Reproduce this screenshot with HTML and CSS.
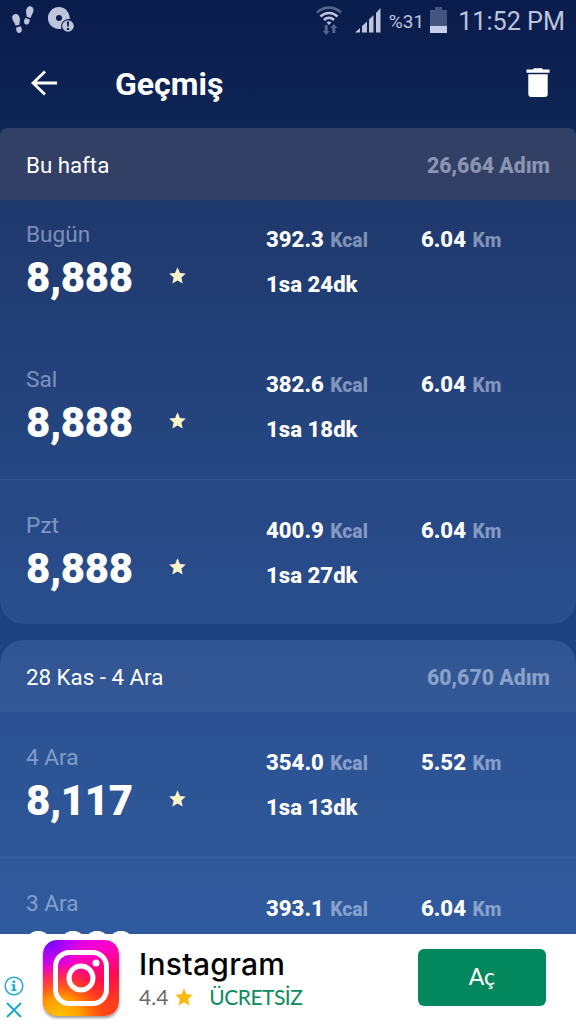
FILE: index.html
```html
<!DOCTYPE html>
<html lang="tr">
<head>
    <meta charset="UTF-8">
    <meta name="viewport" content="width=device-width, initial-scale=1.0">
    <title>Geçmiş</title>
    <link rel="stylesheet" href="styles.css">
</head>
<body>

    <!-- Shared icons -->
    <svg class="sprite" width="0" height="0">
        <symbol id="star" viewBox="0 0 24 24">
            <path d="M12 .5l3.400 7.800 8.400.8-6.300 5.700 1.800 8.400-7.300-4.300-7.300 4.300 1.800-8.400L.2 9.100l8.400-.8z"/>
        </symbol>
    </svg>

    <div class="screen">

        <!-- Status bar -->
        <div class="status-bar">
            <svg class="icon-steps" width="22" height="28" viewBox="0 0 22 28">
                <path d="M3.500 8c2.400-.3 4.400 2.200 4.400 5.500 0 2-.6 3.300-.5 5.300l-3.900 1C3 16.500.3 15 .2 11.800 0 9.700 1.300 8.200 3.500 8z"/>
                <path d="M4.200 21.400l4.500-1.100c1.700 2.400 1.700 5.900-.8 6.500-2.800.7-4-2.200-3.700-5.400z"/>
                <path d="M18.300.2c-2.500-.3-4.300 2.400-4.200 5.700 0 2 .7 2.900.6 4.900l4 1.300c.5-3.300 2.700-4.800 2.800-7.900.1-2.100-1-3.700-3.200-4z"/>
                <path d="M13.400 12l4.400 1.500c0 3.300-1.400 5.700-3.900 4.900-2.500-.8-2.200-4.100-.5-6.400z"/>
            </svg>
            <svg class="icon-disc" width="28" height="28" viewBox="0 0 28 28">
                <path fill-rule="evenodd" d="M11 1a11 11 0 1 0 2.500 21.700A7.500 7.500 0 0 1 21.700 13 11 11 0 0 0 11 1zm0 8a3 3 0 1 1 0 6 3 3 0 0 1 0-6z"/>
                <circle cx="20" cy="20" r="5.800"/>
                <path d="M18.900 15.500h2.200l-.4 5.300h-1.400zM18.900 22h2.200v2h-2.200z" fill="#0c1f50"/>
            </svg>
            <div class="status-right">
                <svg class="icon-wifi" width="28" height="30" viewBox="0 0 28 30">
                    <g fill="none" stroke-width="2.600">
                        <path d="M2 7.500c7-6.500 17-6.500 24 0" stroke="#56648d"/>
                        <path d="M5.500 11.500c5-4.700 12-4.700 17 0M9 15c3-2.800 7-2.800 10 0" stroke="#bdc5dd"/>
                    </g>
                    <path d="M11.500 17.300q2.500-1.600 5 0L14 20z" fill="#bdc5dd"/>
                    <path d="M9.700 20h3v6h2l-3.500 4-3.500-4h2zM17.300 28h3v-5h2l-3.500-4-3.500 4h2z" fill="#56648d"/>
                </svg>
                <svg class="icon-signal" width="26" height="26" viewBox="0 0 26 26">
                    <path d="M0 25.500L5 21v4.500zM7 19l5-4.500v11H7zM14 12.500l4.500-4.300v17.300H14zM21 6l4.500-5v24.500H21z"/>
                </svg>
                <span class="battery-text">%31</span>
                <svg class="icon-battery" width="17" height="26" viewBox="0 0 17 26">
                    <path d="M5 0h7v3h5v23H0V3h5z" fill="#46557f"/>
                    <path d="M0 19h17v7H0z" fill="#c5cee9"/>
                </svg>
                <span class="clock">11:52 PM</span>
            </div>
        </div>

        <!-- Title bar -->
        <div class="toolbar">
            <svg class="icon-back" width="28" height="26" viewBox="0 0 28 26">
                <path d="M14 1.500L2 13l12 11.500M2 13h24" fill="none" stroke="#fff" stroke-width="2.800"/>
            </svg>
            <h1>Geçmiş</h1>
            <svg class="icon-trash" width="24" height="30" viewBox="0 0 24 30">
                <path d="M.5 1.500h6.300L8 .3h8l1.200 1.200h6.300v3.300H.5zM2.300 6.300h19.400V26q0 3-3 3H5.300q-3 0-3-3z"/>
            </svg>
        </div>

        <!-- History list -->
        <div class="history">
            <div class="week first">
                <div class="week-header">
                    <span>Bu hafta</span>
                    <span class="total">26,664 Adım</span>
                </div>
                <div class="day">
                    <div class="steps">
                        <span class="date">Bugün</span>
                        <span class="count">8,888</span>
                    </div>
                    <svg class="star"><use href="#star"/></svg>
                    <div class="stats">
                        <span class="kcal">392.3 <small>Kcal</small></span>
                        <span>6.04 <small>Km</small></span>
                        <span class="time">1sa 24dk</span>
                    </div>
                </div>
                <div class="day">
                    <div class="steps">
                        <span class="date">Sal</span>
                        <span class="count">8,888</span>
                    </div>
                    <svg class="star"><use href="#star"/></svg>
                    <div class="stats">
                        <span class="kcal">382.6 <small>Kcal</small></span>
                        <span>6.04 <small>Km</small></span>
                        <span class="time">1sa 18dk</span>
                    </div>
                </div>
                <div class="day">
                    <div class="steps">
                        <span class="date">Pzt</span>
                        <span class="count">8,888</span>
                    </div>
                    <svg class="star"><use href="#star"/></svg>
                    <div class="stats">
                        <span class="kcal">400.9 <small>Kcal</small></span>
                        <span>6.04 <small>Km</small></span>
                        <span class="time">1sa 27dk</span>
                    </div>
                </div>
            </div>

            <div class="week">
                <div class="week-header">
                    <span>28 Kas - 4 Ara</span>
                    <span class="total">60,670 Adım</span>
                </div>
                <div class="day">
                    <div class="steps">
                        <span class="date">4 Ara</span>
                        <span class="count">8,117</span>
                    </div>
                    <svg class="star"><use href="#star"/></svg>
                    <div class="stats">
                        <span class="kcal">354.0 <small>Kcal</small></span>
                        <span>5.52 <small>Km</small></span>
                        <span class="time">1sa 13dk</span>
                    </div>
                </div>
                <div class="day">
                    <div class="steps">
                        <span class="date">3 Ara</span>
                        <span class="count">8,888</span>
                    </div>
                    <div class="stats no-star">
                        <span class="kcal">393.1 <small>Kcal</small></span>
                        <span>6.04 <small>Km</small></span>
                    </div>
                </div>
            </div>
        </div>

        <!-- Ad banner -->
        <div class="ad">
            <div class="ad-choices">
                <svg width="20" height="20" viewBox="0 0 20 20">
                    <circle cx="10" cy="10" r="8.800" fill="none" stroke="#1fa9cf" stroke-width="1.500"/>
                    <path d="M8.700 4.500h2.600v2.400H8.700zM7.500 8.300h3.700v5.200h1.300V15h-5v-1.500h1.300V9.800H7.500z" fill="#1fa9cf"/>
                </svg>
                <svg width="16" height="16" viewBox="0 0 16 16">
                    <path d="M1 1l14 14M15 1L1 15" stroke="#1fa9cf" stroke-width="2"/>
                </svg>
            </div>
            <svg class="ad-logo" width="76" height="76" viewBox="0 0 76 76">
                <defs>
                    <linearGradient id="base" x1="0" y1="0" x2=".35" y2="1">
                        <stop offset="0" stop-color="#c800ff"/>
                        <stop offset=".35" stop-color="#ff00c8"/>
                        <stop offset=".7" stop-color="#ff0a50"/>
                        <stop offset="1" stop-color="#ff3c1e"/>
                    </linearGradient>
                    <radialGradient id="violet" cx=".08" cy="0" r=".5">
                        <stop offset="0" stop-color="#6a0cff"/>
                        <stop offset="1" stop-color="#b400ff" stop-opacity="0"/>
                    </radialGradient>
                    <radialGradient id="sun" cx=".22" cy="1.050" r=".75">
                        <stop offset="0" stop-color="#ffcc00"/>
                        <stop offset=".4" stop-color="#ff9a00"/>
                        <stop offset="1" stop-color="#ff3c00" stop-opacity="0"/>
                    </radialGradient>
                </defs>
                <rect width="76" height="76" rx="14" fill="url(#base)"/>
                <rect width="76" height="76" rx="14" fill="url(#violet)"/>
                <rect width="76" height="76" rx="14" fill="url(#sun)"/>
                <rect x="12.500" y="12.500" width="51" height="51" rx="14" fill="none" stroke="#fff" stroke-width="5"/>
                <circle cx="38" cy="38" r="12" fill="none" stroke="#fff" stroke-width="5"/>
                <circle cx="53" cy="23" r="3.500" fill="#fff"/>
            </svg>
            <div class="ad-info">
                <div class="ad-name">Instagram</div>
                <div class="ad-meta">
                    <span>4.4</span>
                    <svg class="ad-star"><use href="#star"/></svg>
                    <span class="price">ÜCRETSİZ</span>
                </div>
            </div>
            <button class="ad-button">Aç</button>
        </div>
    </div>

</body>
</html>
```
FILE: styles.css
```css
body {
    font-family: Roboto, sans-serif;
    margin: 0;
    color: white;
}

.sprite {
    position: absolute;
}

.screen {
    display: flex;
    flex-direction: column;
    height: 1024px;
    overflow: hidden;
    background: linear-gradient(#0a1c4c 0, #0e2556 128px, #1e4282 630px, #244f93 934px);
}

.status-bar {
    display: flex;
    height: 40px;
    flex: none;
    align-items: center;
    padding: 0 11px 0 12px;
    box-sizing: border-box;
    color: #bdc5dd;
    fill: #bdc5dd;
}

.icon-disc {
    margin-left: 14px;
}

.status-right {
    display: flex;
    align-items: center;
    margin-left: auto;
}

.icon-signal {
    margin-left: 12px;
}

.battery-text {
    font-size: 19px;
    margin: 2px 0 0 8px;
}

.icon-battery {
    margin-left: 6px;
}

.clock {
    font-size: 25.200px;
    margin: 2px 0 0 11px;
}

.toolbar {
    display: flex;
    align-items: center;
    height: 88px;
    flex: none;
    padding: 0 26px 2px 31px;
    box-sizing: border-box;
}

.toolbar h1 {
    font-size: 32px;
    font-weight: 700;
    margin: 2px auto 0 56px;
}

.icon-trash {
    fill: white;
}

.history {
    flex: 1;
    min-height: 0;
    overflow: hidden;
}

.week {
    border-radius: 24px;
    overflow: hidden;
    margin-bottom: 16px;
    background: rgba(160, 200, 255, 0.1);
}

.week.first {
    border-radius: 8px 8px 24px 24px;
}

.week-header {
    display: flex;
    justify-content: space-between;
    align-items: center;
    height: 72px;
    padding: 2px 26px 0;
    box-sizing: border-box;
    font-size: 22.300px;
    background: rgba(255, 255, 255, 0.04);
}

.first .week-header {
    background: #334065;
}

.total {
    font-size: 21.300px;
    font-weight: 800;
    color: rgba(225, 235, 255, 0.5);
}

.day {
    display: flex;
    align-items: flex-start;
    height: 145.500px;
    padding: 32px 26px 0;
    box-sizing: border-box;
}

.first .week-header + .day {
    height: 133px;
    padding-top: 21px;
}

.week-header + .day {
    height: 144.500px;
}

.day + .day {
    border-top: 1px solid rgba(255, 255, 255, 0.06);
}

/* no line under today's row */
.first .week-header + .day + .day {
    border-top-color: transparent;
}

.steps {
    width: 143px;
}

.date {
    display: block;
    font-size: 22.600px;
    line-height: 27px;
    color: rgba(215, 228, 255, 0.5);
}

.count {
    display: block;
    font-size: 42px;
    line-height: 50px;
    font-weight: 900;
    letter-spacing: -0.400px;
    margin-top: 5px;
}

.star {
    width: 17px;
    height: 17px;
    margin-top: 46px;
    fill: #fbf3c8;
}

.stats {
    display: grid;
    grid-template-columns: 155px auto;
    grid-auto-rows: 27px;
    row-gap: 18px;
    margin: 5px 0 0 80px;
    font-size: 22.200px;
    line-height: 27px;
    font-weight: 800;
}

.stats.no-star {
    margin-left: 97px;
}

.stats small {
    font-size: 19.300px;
    margin-left: 1px;
    color: rgba(225, 235, 255, 0.5);
}

.ad {
    display: flex;
    align-items: flex-start;
    height: 90px;
    flex: none;
    padding: 0 30px 0 4px;
    box-sizing: border-box;
    background: white;
    color: black;
}

.ad-choices {
    display: flex;
    flex-direction: column;
    align-items: center;
    gap: 6px;
    margin-top: 42px;
    width: 20px;
}

.ad-logo {
    margin: 6px 0 0 19px;
    border-radius: 14px;
    box-shadow: 0 2px 3px rgba(0, 0, 0, 0.4);
}

.ad-info {
    margin: 11px 0 0 20px;
    font-family: Lato, sans-serif;
}

.ad-name {
    font-family: Inter, sans-serif;
    font-size: 30px;
    font-weight: 500;
    letter-spacing: 0.300px;
    line-height: 38px;
}

.ad-meta {
    display: flex;
    align-items: center;
    font-size: 21px;
    line-height: 28px;
    color: #6a6a6a;
}

.ad-star {
    width: 18px;
    height: 18px;
    margin: 0 16px 0 7px;
    fill: #f9b90f;
}

.price {
    color: #0b8a5f;
    letter-spacing: -0.500px;
}

.ad-button {
    width: 128px;
    height: 57px;
    margin: 15px 0 0 auto;
    padding-bottom: 4px;
    border: none;
    border-radius: 6px;
    background-color: #03875d;
    color: white;
    font-family: Lato, sans-serif;
    font-size: 23px;
}
```
